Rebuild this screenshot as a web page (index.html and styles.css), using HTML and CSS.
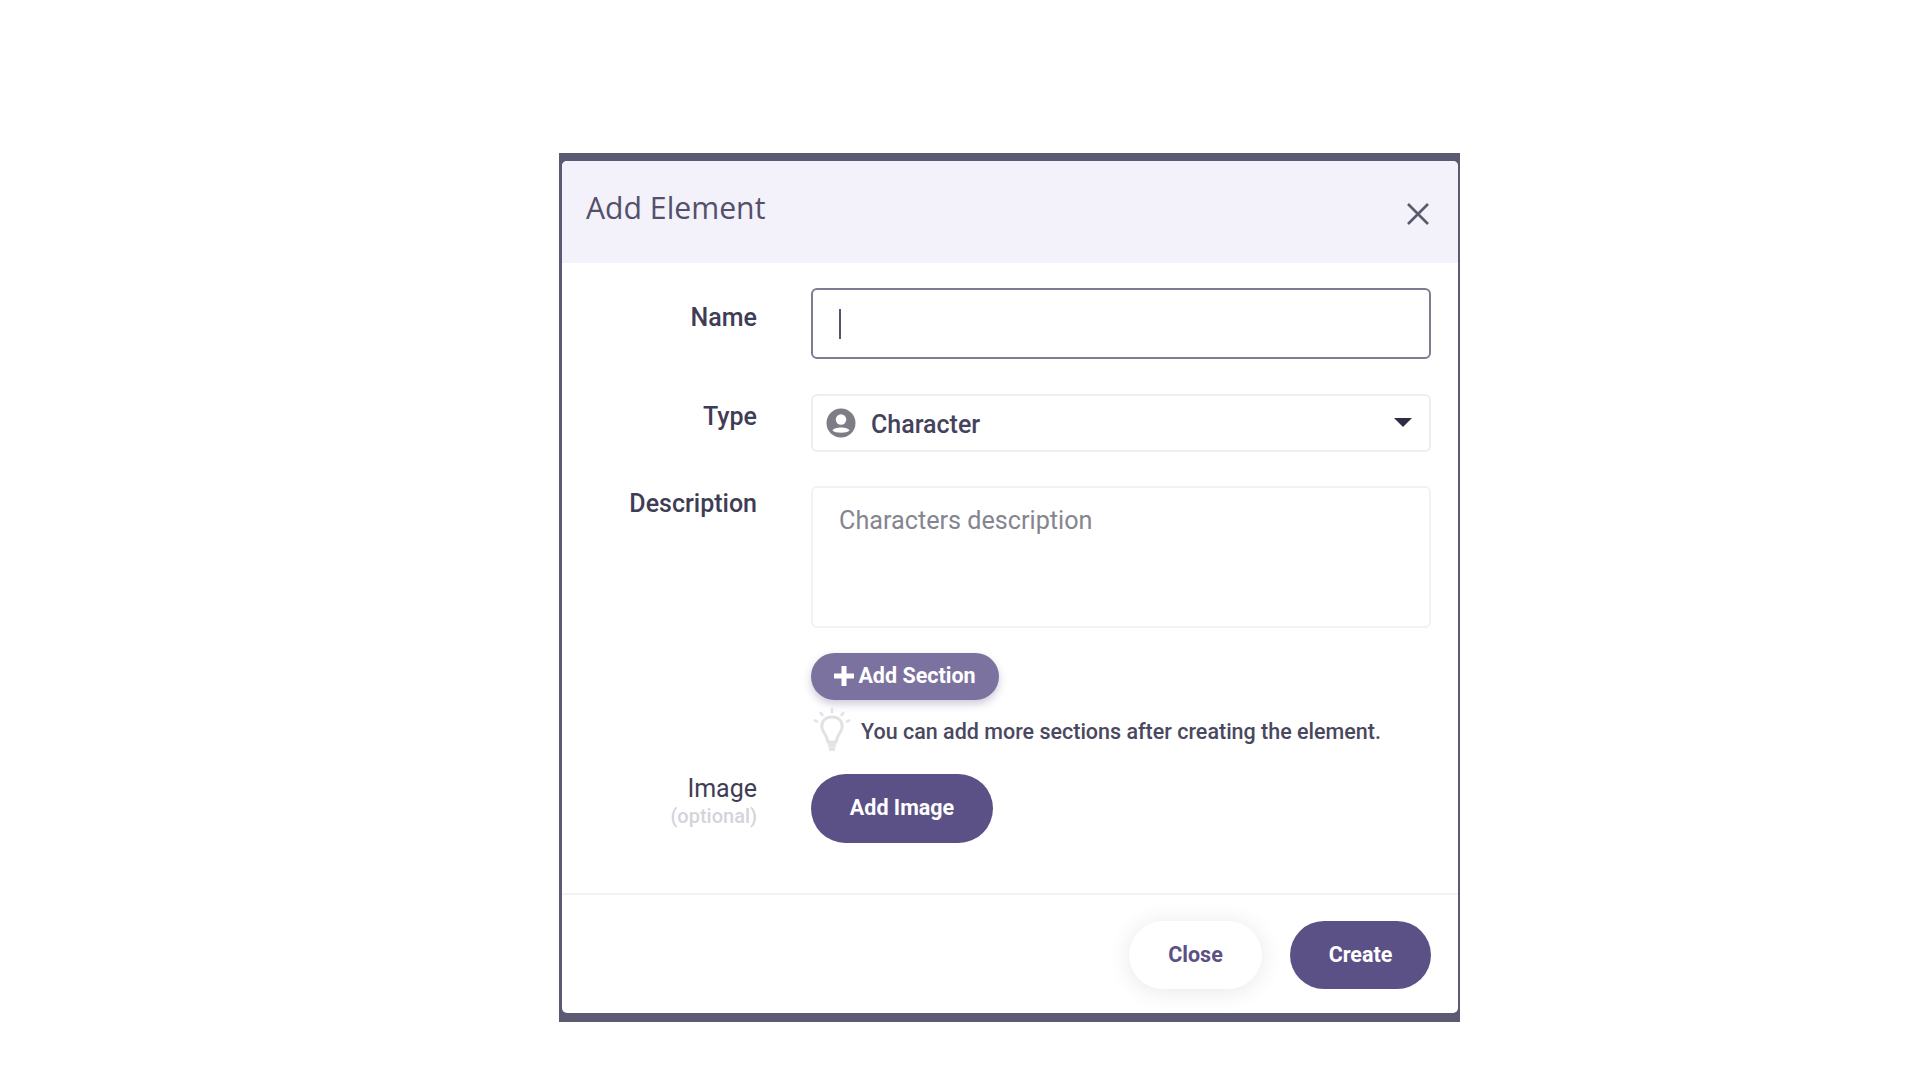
FILE: index.html
```html
<!DOCTYPE html>
<html lang="en">
<head>
  <meta charset="UTF-8" />
  <meta name="viewport" content="width=device-width, initial-scale=1.0" />
  <title>Add Element</title>
  <link rel="stylesheet" href="styles.css">
</head>
<body>
  <div class="backdrop">
    <div class="modal">
      <div class="modal-header">
        <h1 class="modal-title">Add Element</h1>
        <button class="close-x" aria-label="Close">
          <svg width="24" height="24" viewBox="0 0 24 24"><path d="M2 2 L22 22 M22 2 L2 22" stroke="#5a5a6e" stroke-width="2.6" fill="none" /></svg>
        </button>
      </div>

      <div class="modal-body">
        <div class="row row-name">
          <label class="label">Name</label>
          <div class="field field-name"><span class="caret"></span></div>
        </div>

        <div class="row row-type">
          <label class="label">Type</label>
          <div class="field field-select">
            <svg class="type-icon" width="30" height="30" viewBox="0 0 30 30">
              <circle cx="15" cy="15" r="14.5" fill="#7d7d86" />
              <circle cx="15" cy="11.5" r="5.2" fill="#fff" />
              <path d="M6.5 22.5 C8 18.5 22 18.5 23.5 22.5 C21 25.5 9 25.5 6.5 22.5 Z" fill="#fff" />
            </svg>
            <span class="select-text">Character</span>
            <span class="arrow"></span>
          </div>
        </div>

        <div class="row row-desc">
          <label class="label">Description</label>
          <div class="field field-desc">Characters description</div>
        </div>

        <div class="row row-section">
          <span></span>
          <button class="btn-section">
            <svg class="plus" width="20" height="20" viewBox="0 0 20 20"><path d="M10 0 V20 M0 10 H20" stroke="#fff" stroke-width="5" fill="none" /></svg>
            <span>Add Section</span>
          </button>
        </div>

        <div class="row row-hint">
          <span></span>
          <div class="hint">
            <svg class="bulb" width="40" height="46" viewBox="0 0 40 46">
              <path d="M20 10 C12 10 9 16 10 21 C11 26 15 28 16 35 L24 35 C25 28 29 26 30 21 C31 16 28 10 20 10 Z" fill="none" stroke="#e2e2e6" stroke-width="3" />
              <path d="M16 38 H24 M17 42 H23" stroke="#e2e2e6" stroke-width="3.5" />
              <path d="M20 1 V6 M8 5 L11 9 M32 5 L29 9 M2 13 L6 15 M38 13 L34 15" stroke="#e2e2e6" stroke-width="2.5" />
            </svg>
            <span class="hint-text">You can add more sections after creating the element.</span>
          </div>
        </div>

        <div class="row row-image">
          <div class="label">Image<small class="optional">(optional)</small></div>
          <button class="btn btn-primary btn-image">Add Image</button>
        </div>
      </div>

      <div class="modal-footer">
        <button class="btn btn-light">Close</button>
        <button class="btn btn-primary btn-create">Create</button>
      </div>
    </div>
  </div>
</body>
</html>
```

FILE: styles.css
```css
body, html {
  margin: 0;
  padding: 0;
  height: 100%;
  background: #fff;
  font-family: 'Roboto', sans-serif;
  color: #3f3d56;
}

body {
  padding: 153px 0 0 559px;
  box-sizing: border-box;
}

.backdrop {
  width: 901px;
  height: 869px;
  box-sizing: border-box;
  padding: 8px 2px 9px 3px;
  background: #5a5a72;
}

.modal {
  height: 100%;
  display: flex;
  flex-direction: column;
  background: #fff;
  border-radius: 5px;
  overflow: hidden;
}

.modal-header {
  flex: none;
  height: 102px;
  box-sizing: border-box;
  padding: 26px 28px 0 24px;
  display: flex;
  justify-content: space-between;
  background: #f3f1fa;
}

.modal-title {
  margin: 0;
  font-family: 'Open Sans', sans-serif;
  font-weight: 400;
  font-size: 30.2px;
  line-height: 41px;
  color: #52506a;
}

.close-x {
  width: 24px;
  height: 24px;
  margin-top: 15px;
  padding: 0;
  border: none;
  background: none;
}

.modal-body {
  flex: 1;
  padding: 25px 27px 0 0;
}

.row {
  display: grid;
  grid-template-columns: 195px 1fr;
  column-gap: 54px;
}

.label {
  text-align: right;
  font-size: 25px;
  font-weight: 500;
  line-height: 30px;
  color: #3f3d56;
}

.row-name .label { padding-top: 15px; }
.row-type .label { padding-top: 8px; }
.row-desc .label { padding-top: 3px; }
.row-image .label { padding-top: 0; font-weight: 400; }

.optional {
  display: block;
  font-size: 20px;
  line-height: 24px;
  font-weight: 500;
  color: #d4d3da;
}

.field {
  box-sizing: border-box;
  border: 2px solid #eeedf1;
  border-radius: 6px;
  background: #fff;
}

.field-name {
  height: 71px;
  display: flex;
  align-items: center;
  padding-left: 26px;
  border-color: #7d7c91;
}

.caret {
  width: 2px;
  height: 30px;
  background: #55546a;
}

.row-type { margin-top: 35px; }

.field-select {
  height: 58px;
  display: flex;
  align-items: center;
  padding: 0 17px 0 13px;
}

.type-icon { flex: none; }

.select-text {
  flex: 1;
  margin-left: 15px;
  font-size: 25px;
  font-weight: 500;
  color: #45435c;
  position: relative;
  top: 1px;
}

.arrow {
  width: 0;
  height: 0;
  margin-top: -2px;
  border-left: 9px solid transparent;
  border-right: 9px solid transparent;
  border-top: 9px solid #2f2d42;
}

.row-desc { margin-top: 34px; }

.field-desc {
  height: 142px;
  padding: 16px 26px;
  border-color: #f2f1f4;
  font-size: 25.2px;
  line-height: 33px;
  color: #85858f;
}

.row-section { margin-top: 25px; }

.btn-section {
  width: 188px;
  height: 47px;
  padding: 0 0 2px;
  display: flex;
  align-items: center;
  justify-content: center;
  gap: 4px;
  border: none;
  border-radius: 24px;
  background: #7b729f;
  color: #fff;
  font-family: 'Roboto', sans-serif;
  font-size: 21.5px;
  font-weight: 700;
  box-shadow: 0 4px 8px rgba(90, 80, 130, 0.3);
}

.plus { flex: none; }

.row-hint { margin-top: 7px; }

.hint {
  display: flex;
  align-items: center;
  gap: 9px;
  height: 46px;
  font-size: 21.5px;
  font-weight: 500;
  color: #4a4860;
}

.hint-text {
  position: relative;
  top: 1px;
}

.bulb { flex: none; margin-left: 1px; }

.row-image { margin-top: 21px; }

.btn {
  height: 68px;
  border: none;
  border-radius: 34px;
  padding: 0 0 2px;
  font-family: 'Roboto', sans-serif;
  font-size: 21.5px;
  font-weight: 700;
}

.btn-primary {
  background: #5c5186;
  color: #fff;
}

.btn-image {
  width: 182px;
  height: 69px;
  border-radius: 35px;
}

.modal-footer {
  flex: none;
  height: 120px;
  box-sizing: border-box;
  padding: 26px 27px 0 0;
  display: flex;
  justify-content: flex-end;
  gap: 28px;
  border-top: 2px solid #f2f1f5;
}

.btn-light {
  width: 133px;
  background: #fff;
  color: #5c5186;
  box-shadow: 0 2px 22px rgba(60, 55, 90, 0.12);
}

.btn-create { width: 141px; }
```
